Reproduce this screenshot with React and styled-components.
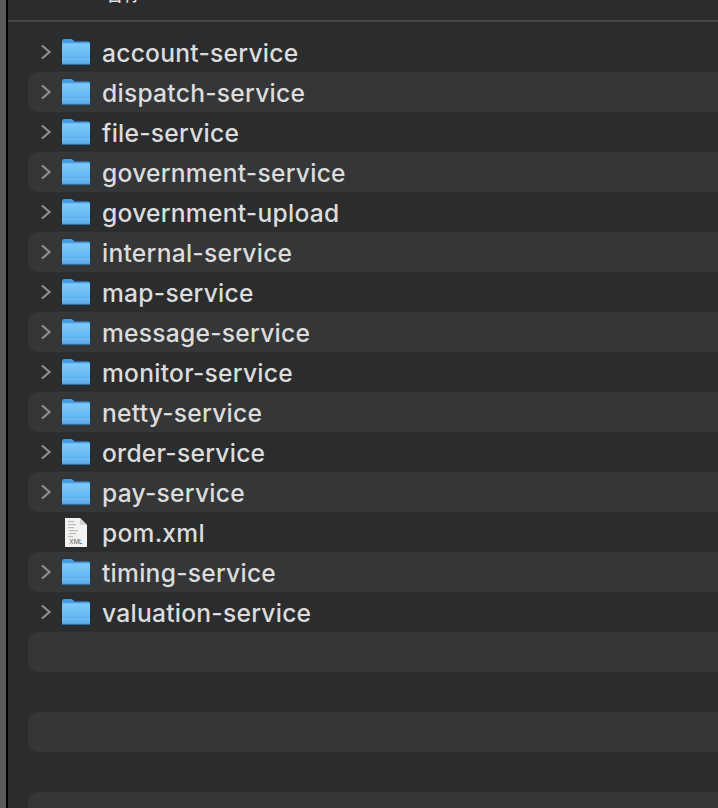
import React from "react";
import styled, { createGlobalStyle } from "styled-components";

const Global = createGlobalStyle`
  html, body { margin: 0; padding: 0; background: #2b2c2e; overflow: hidden; }
  body { font-family: "Inter", "Liberation Sans", sans-serif; }
`;

const Frame = styled.div`
  display: flex;
  width: 718px;
  height: 808px;
  overflow: hidden;
`;

const Desktop = styled.div`
  width: 6px;
  flex: none;
  background: #5a5a58;
`;

const Edge = styled.div`
  width: 2px;
  flex: none;
  background: #000;
`;

const Window = styled.div`
  flex: 1;
  min-width: 0;
  display: flex;
  flex-direction: column;
  background: #2b2c2e;
`;

const Header = styled.div`
  height: 20px;
  flex: none;
  position: relative;
  overflow: hidden;
  border-bottom: 2px solid #47484a;
  box-sizing: content-box;
`;

const HeaderText = styled.span`
  position: absolute;
  left: 97px;
  top: -17px;
  font-family: "Noto Sans CJK SC", sans-serif;
  font-size: 18px;
  font-weight: 500;
  line-height: 20px;
  color: #dcdcdc;
`;

const List = styled.div`
  padding: 10px 0 0 20px;
  display: flex;
  flex-direction: column;
`;

const Row = styled.div`
  height: 40px;
  flex: none;
  display: flex;
  align-items: center;
  padding-left: 11px;
  border-radius: 10px 0 0 10px;
  background: ${(p) => (p.$striped ? "#353638" : "transparent")};
`;

const Chevron = styled.svg`
  width: 13px;
  height: 18px;
  flex: none;
`;

const ChevronSlot = styled.div`
  width: 12px;
  flex: none;
  display: flex;
`;

const IconSlot = styled.div`
  width: 30px;
  height: 29px;
  margin-left: 10px;
  flex: none;
  display: flex;
  align-items: center;
  justify-content: center;
`;

const Label = styled.span`
  margin: 2px 0 0 11px;
  font-family: "Inter", "Liberation Sans", sans-serif;
  font-size: 24.6px;
  font-weight: 450;
  line-height: 40px;
  letter-spacing: 0.25px;
  color: #dcdcdc;
  white-space: nowrap;
`;

const FolderIcon = ({ id }) => (
  <svg width="28" height="26" viewBox="0 0 28 26">
    <defs>
      <linearGradient id={id} x1="0" y1="0" x2="0" y2="1">
        <stop offset="0" stopColor="#7fc8f9" />
        <stop offset="0.65" stopColor="#63b6f2" />
        <stop offset="1" stopColor="#4fa3e2" />
      </linearGradient>
    </defs>
    <path d="M0 2.5 Q0 0 2.5 0 H8.5 Q10 0 11 1 L12.5 2.5 H26.5 Q28 2.5 28 4 V10 H0 Z" fill="#439ce4" />
    <path d="M0 5 Q0 4.2 1 4.2 H27 Q28 4.2 28 5 V24.5 Q28 25.5 27 25.5 H1 Q0 25.5 0 24.5 Z" fill={`url(#${id})`} />
    <rect y="20" width="28" height="0.8" fill="#93ccf5" opacity="0.8" />
    <rect y="22.6" width="28" height="0.7" fill="#93ccf5" opacity="0.5" />
    <rect y="25" width="28" height="1" rx="0.5" fill="#2a6ea8" />
  </svg>
);

const XmlIcon = () => (
  <svg width="22" height="29" viewBox="0 0 22 29">
    <path d="M0 0 H15 L22 7 V29 H0 Z" fill="#f2f2f2" />
    <path d="M15 0 L22 7 H15 Z" fill="#d2d2d2" />
    <g fill="#bdbdbd">
      <rect x="3" y="3" width="6" height="1.2" />
      <rect x="3" y="6" width="8" height="1.2" />
      <rect x="3" y="9" width="6" height="1.2" />
      <rect x="4" y="12" width="9" height="1.2" />
      <rect x="4" y="15" width="7" height="1.2" />
      <rect x="3" y="18" width="5" height="1.2" />
    </g>
    <text x="11" y="26" textAnchor="middle" fontFamily="Liberation Sans, sans-serif" fontSize="6.5" fill="#555">XML</text>
  </svg>
);

const names = [
  "account-service", "dispatch-service", "file-service", "government-service",
  "government-upload", "internal-service", "map-service", "message-service",
  "monitor-service", "netty-service", "order-service", "pay-service",
  "pom.xml", "timing-service", "valuation-service", "", "", "", "", "",
];

export default function App() {
  return (
    <>
      <Global />
      <Frame>
        <Desktop />
        <Edge />
        <Window>
          <Header>
            <HeaderText>名称</HeaderText>
          </Header>
          <List>
            {names.map((name, i) => {
              const isFile = name === "pom.xml";
              const isFolder = name && !isFile;
              return (
                <Row key={i} $striped={i % 2 === 1}>
                  <ChevronSlot>
                    {isFolder && (
                      <Chevron viewBox="0 0 13 18">
                        <path d="M3 2.5 L10.5 9 L3 15.5" fill="none" stroke="#8f8f8f" strokeWidth="2.2" />
                      </Chevron>
                    )}
                  </ChevronSlot>
                  {name && (
                    <IconSlot>
                      {isFile ? <XmlIcon /> : <FolderIcon id={`f${i}`} />}
                    </IconSlot>
                  )}
                  {name && <Label>{name}</Label>}
                </Row>
              );
            })}
          </List>
        </Window>
      </Frame>
    </>
  );
}
